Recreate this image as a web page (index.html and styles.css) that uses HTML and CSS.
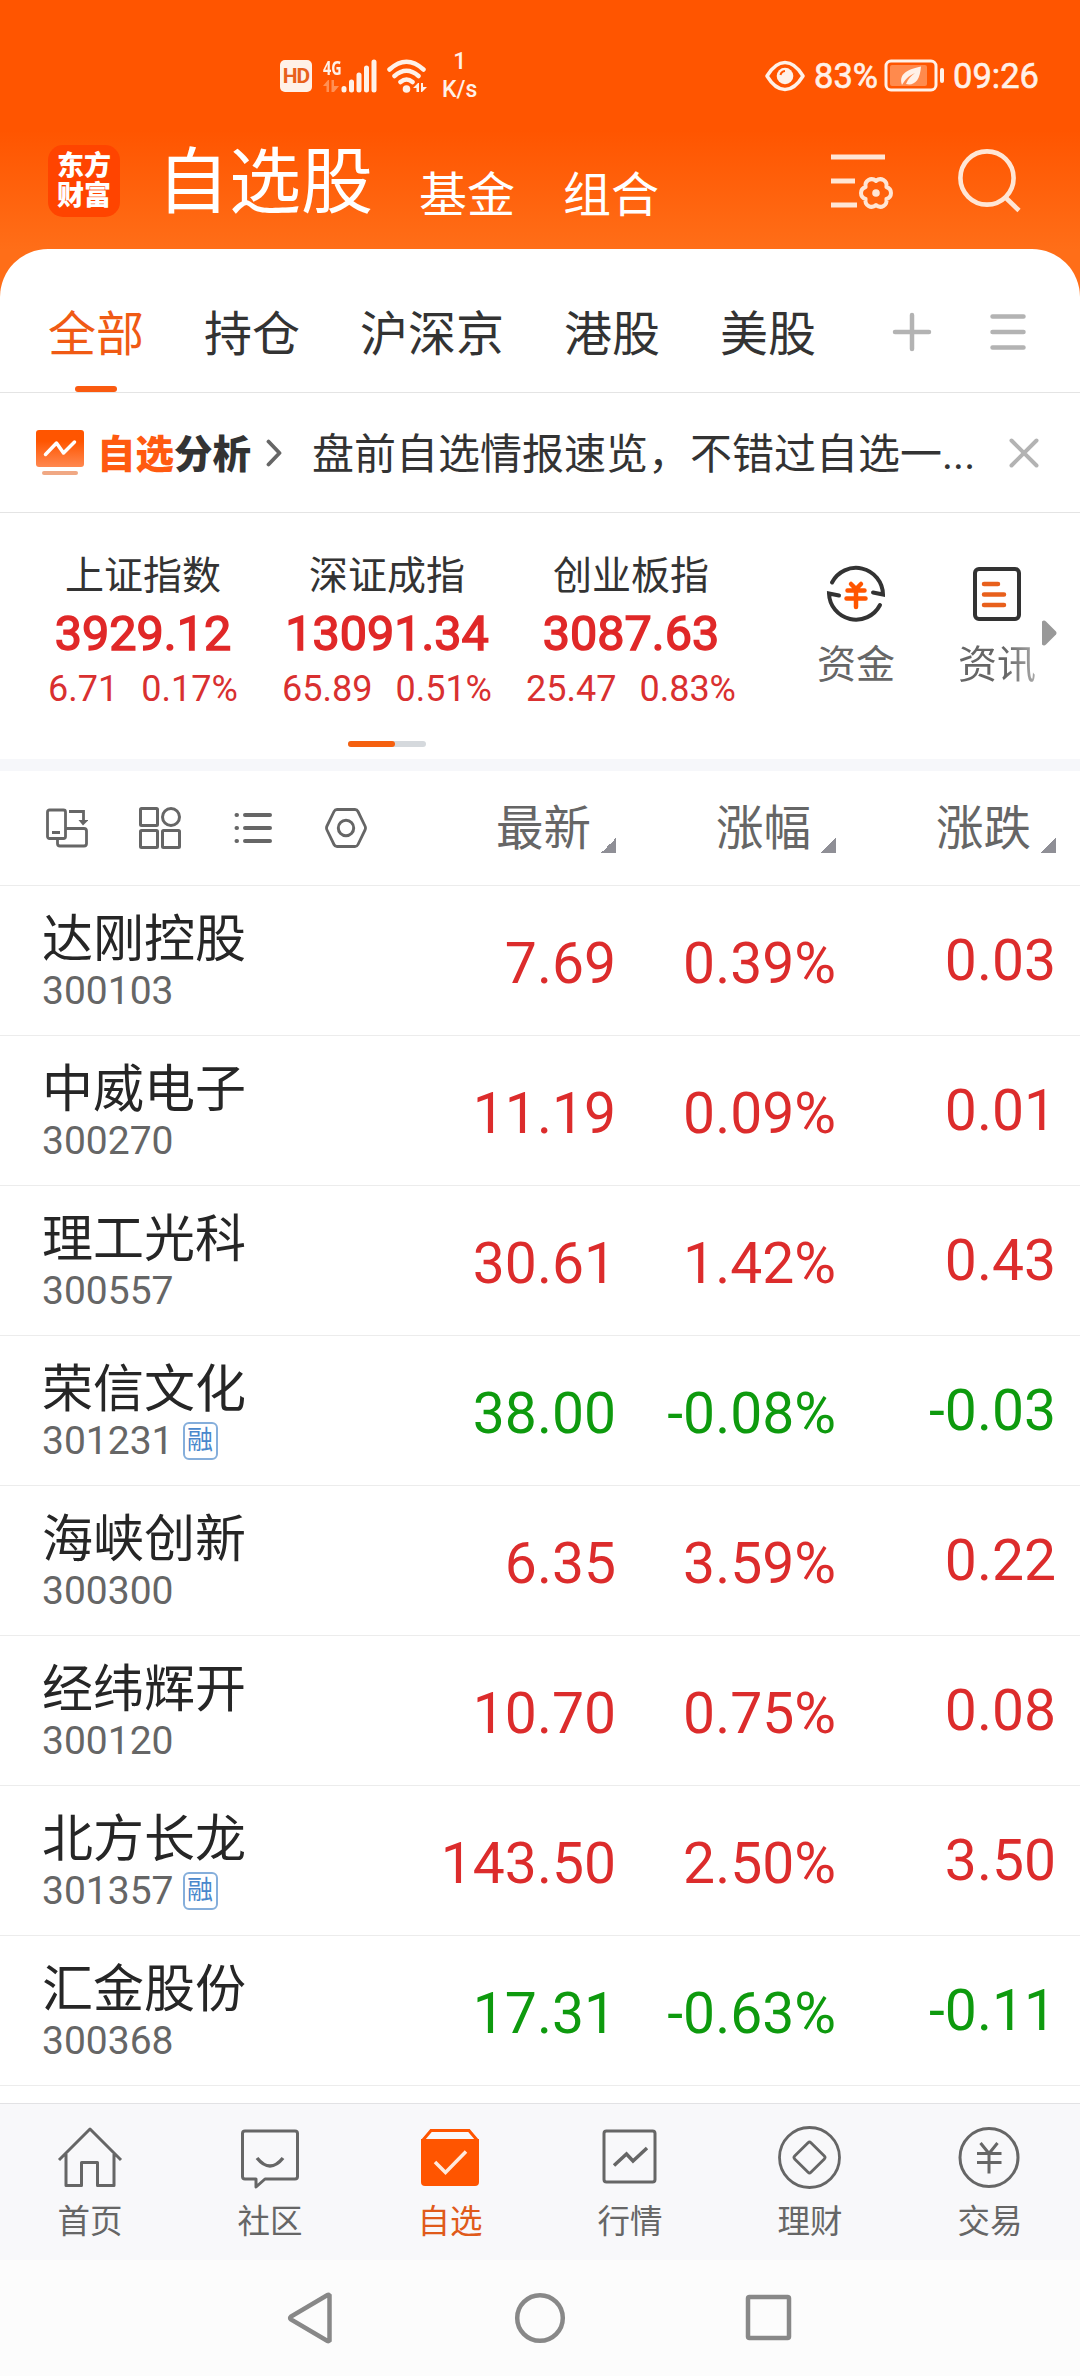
FILE: index.html
```html
<!DOCTYPE html>
<html lang="zh-CN">
  <head>
    <meta charset="utf-8">
    <title>自选股</title>
    <link rel="stylesheet" href="styles.css">
  </head>
  <body>
    <header class="header">
      <div class="status-bar">
        <div class="status-left">
          <span class="hd">HD</span>
          <div class="mobile">
            <span class="mobile-type">4G</span>
            <svg width="16" height="12" viewBox="0 0 16 12" fill="#ff9055"><path d="M0 6 5 0h1v12H3.500V6zM8.500 0H11v6h5l-5 6H8.500z"/></svg>
          </div>
          <svg class="signal" width="36" height="34" viewBox="0 0 36 34" stroke="#fff1e8" stroke-width="5" stroke-linecap="round"><path d="M3 29.500v1.500M10.500 23v8M18 16v15M25.500 9v22M33 3v28"/></svg>
          <svg class="wifi" width="42" height="34" viewBox="0 0 42 34" fill="none" stroke="#fff1e8" stroke-width="4.500" stroke-linecap="round">
            <path d="M2.500 10.500Q19.500-5 36.500 10.500M7.500 17Q19.500 6.500 31.500 17M13.500 23Q19.500 18 25.500 23"/>
            <circle cx="19.500" cy="30" r="3.800" fill="#fff1e8" stroke="none"/>
            <path d="M26 29l5-5h1v9h-2.500v-4zM34 24h2v4h4l-5 5h-1z" fill="#fff1e8" stroke="none"/>
          </svg>
          <div class="speed"><span>1</span><span>K/s</span></div>
        </div>
        <div class="status-right">
          <svg width="40" height="32" viewBox="0 0 40 32" fill="none" stroke="#fff1e8" stroke-width="3.500">
            <path d="M2 16C8 6 14 2.500 20 2.500S32 6 38 16C32 26 26 29.500 20 29.500S8 26 2 16z" stroke-linejoin="round"/>
            <circle cx="20" cy="16" r="8.300" fill="#fff1e8" stroke="none"/>
            <path d="M15.500 15a5 5 0 0 1 4.500-4" stroke="#ff5500" stroke-width="2"/>
          </svg>
          <span class="percent">83%</span>
          <svg class="battery" width="61" height="34" viewBox="0 0 61 34" fill="none">
            <rect x="2" y="2" width="50" height="29" rx="5" stroke="#fff1e8" stroke-width="3"/>
            <rect x="6" y="6" width="37" height="21" rx="2" fill="#ff8a4d"/>
            <path d="M18 26c-3-9 2-15 19-18.500C36 22 30 27 22 25c2-5 5-8 9-11-7 3-10 7-13 12z" fill="#fff1e8"/>
            <path d="M58 11v11" stroke="#fff1e8" stroke-width="4" stroke-linecap="round"/>
          </svg>
          <span>09:26</span>
        </div>
      </div>

      <div class="title-bar">
        <div class="logo"><span>东方</span><span>财富</span></div>
        <h1>自选股</h1>
        <a class="sub-title">基金</a>
        <a class="sub-title">组合</a>
        <svg class="filter" width="64" height="60" viewBox="0 0 64 60" fill="none" stroke="#ffe6d5" stroke-width="5">
          <path d="M0 6h54M0 30h24M0 54h26"/>
          <path transform="translate(45 42)" d="M10.400-6C16.500-4 16.500 4 10.400 6C11.700 12.300 4.800 16.300 0 12C-4.800 16.300-11.700 12.300-10.400 6C-16.500 4-16.500-4-10.400-6C-11.700-12.300-4.800-16.300 0-12C4.800-16.300 11.700-12.300 10.400-6z" stroke-width="4" stroke-linejoin="round"/>
          <circle cx="45" cy="42" r="3.800" fill="#ffe6d5" stroke="none"/>
        </svg>
        <svg class="search" width="64" height="64" viewBox="0 0 64 64" fill="none" stroke="#ffe6d5" stroke-width="4.600">
          <circle cx="29" cy="29" r="26.600"/>
          <path d="M47 48l14 13.500"/>
        </svg>
      </div>
    </header>

    <main class="sheet">
      <nav class="groups">
        <a class="active">全部</a>
        <a>持仓</a>
        <a>沪深京</a>
        <a>港股</a>
        <a>美股</a>
        <svg class="add" width="40" height="40" viewBox="0 0 40 40" stroke="#b3b3b3" stroke-width="4.500" stroke-linecap="round"><path d="M3 20h34M20 3v34"/></svg>
        <svg class="menu" width="36" height="36" viewBox="0 0 36 36" stroke="#b3b3b3" stroke-width="4.500" stroke-linecap="round"><path d="M2.500 2.500h31M2.500 18h31M2.500 33.500h31"/></svg>
      </nav>

      <section class="notice">
        <svg width="48" height="46" viewBox="0 0 48 46" fill="none">
          <defs>
            <linearGradient id="notice-bg" x1="0" y1="0" x2="0" y2="1">
              <stop offset=".3" stop-color="#ff5500"/>
              <stop offset="1" stop-color="#ff8850"/>
            </linearGradient>
          </defs>
          <rect width="48" height="37" rx="3" fill="url(#notice-bg)"/>
          <path d="M9.500 24.500 20.500 13l7 10L38.500 12" stroke="#fff" stroke-width="3.500" stroke-linecap="round" stroke-linejoin="round"/>
          <rect x="6" y="41" width="36" height="4" rx="2" fill="#f0a884"/>
        </svg>
        <strong><em>自选</em>分析</strong>
        <svg class="chevron" width="16" height="28" viewBox="0 0 16 28" fill="none" stroke="#666" stroke-width="3.800" stroke-linecap="round" stroke-linejoin="round"><path d="M2.500 2.500 13.500 14l-11 11.500"/></svg>
        <p>盘前自选情报速览，不错过自选一...</p>
        <svg class="close" width="30" height="30" viewBox="0 0 30 30" stroke="#b3b3b3" stroke-width="4" stroke-linecap="round"><path d="M2.500 2.500l25 25M27.500 2.500l-25 25"/></svg>
      </section>

      <section class="market">
        <div class="indices">
          <div class="index">
            <h2>上证指数</h2>
            <b>3929.12</b>
            <p><span>6.71</span><span>0.17%</span></p>
          </div>
          <div class="index">
            <h2>深证成指</h2>
            <b>13091.34</b>
            <p><span>65.89</span><span>0.51%</span></p>
          </div>
          <div class="index">
            <h2>创业板指</h2>
            <b>3087.63</b>
            <p><span>25.47</span><span>0.83%</span></p>
          </div>
          <div class="pager"><i></i></div>
        </div>
        <a class="shortcut">
          <svg width="60" height="60" viewBox="0 0 60 60" fill="none" stroke="#333" stroke-width="4" stroke-linecap="round">
            <path d="M6 18.500A27 27 0 0 1 57 30.500L47 28.500M54 41A27 27 0 0 1 3 29.500L13 31.500"/>
            <path d="M25 20l5 5 5-5M21.500 26.500h17M20.500 34.500h19M30 26v17" stroke="#ff5500" stroke-width="4.500"/>
          </svg>
          <span>资金</span>
        </a>
        <a class="shortcut">
          <svg width="60" height="60" viewBox="0 0 60 60" fill="none" stroke="#333" stroke-width="4" stroke-linecap="round">
            <rect x="8" y="5" width="44" height="50" rx="4"/>
            <path d="M17 20h14M17 30.500h20M17 41h20" stroke="#e8601c" stroke-width="4.500"/>
          </svg>
          <span class="fade">资讯</span>
        </a>
        <svg class="more" width="16" height="26" viewBox="0 0 16 26" fill="#999"><path d="M1 1.500q2-2 4 0l10 10q1 1.500 0 3l-10 10q-2 2-4 0z"/></svg>
      </section>

      <div class="columns">
        <div class="tools">
          <svg width="42" height="42" viewBox="0 0 42 42" fill="none" stroke="#666" stroke-width="2.800">
            <rect x="1.500" y="3" width="18" height="28.500" rx="2"/>
            <path d="M6 25.500h8M23 4.500h14.500v11M20 21.500h18q2.500 0 2.500 2.500v12.500q0 2.500-2.500 2.500H14q-2.500 0-2.500-2.500V32"/>
            <path d="M32.500 13h10L37 18.500z" fill="#666" stroke="none"/>
          </svg>
          <svg width="42" height="42" viewBox="0 0 42 42" fill="none" stroke="#666" stroke-width="3">
            <rect x="1.500" y="1.500" width="17" height="17" rx="1"/>
            <circle cx="32" cy="10" r="8.500"/>
            <rect x="1.500" y="23.500" width="17" height="17" rx="1"/>
            <rect x="23.500" y="23.500" width="17" height="17" rx="1"/>
          </svg>
          <svg width="42" height="42" viewBox="0 0 42 42" fill="none" stroke="#666" stroke-width="4" stroke-linecap="round"><path d="M4.500 8h.5M4.500 21h.5M4.500 34h.5M13 8h25M13 21h25M13 34h25"/></svg>
          <svg width="42" height="42" viewBox="0 0 42 42" fill="none" stroke="#666" stroke-width="2.800">
            <path d="M12 2.500h18q2 0 3 2l7 14.500q1 2 0 4l-7 14.500q-1 2-3 2H12q-2 0-3-2L2 23q-1-2 0-4L9 4.500q1-2 3-2z"/>
            <circle cx="21" cy="21" r="7.700" stroke-width="3"/>
          </svg>
        </div>
        <div class="column">最新<i></i></div>
        <div class="column">涨幅<i></i></div>
        <div class="column">涨跌<i></i></div>
      </div>

      <div class="stock up">
        <div class="name"><h3>达刚控股</h3><p>300103</p></div>
        <span>7.69</span><span>0.39%</span><span>0.03</span>
      </div>
      <div class="stock up">
        <div class="name"><h3>中威电子</h3><p>300270</p></div>
        <span>11.19</span><span>0.09%</span><span>0.01</span>
      </div>
      <div class="stock up">
        <div class="name"><h3>理工光科</h3><p>300557</p></div>
        <span>30.61</span><span>1.42%</span><span>0.43</span>
      </div>
      <div class="stock down">
        <div class="name"><h3>荣信文化</h3><p>301231<small>融</small></p></div>
        <span>38.00</span><span>-0.08%</span><span>-0.03</span>
      </div>
      <div class="stock up">
        <div class="name"><h3>海峡创新</h3><p>300300</p></div>
        <span>6.35</span><span>3.59%</span><span>0.22</span>
      </div>
      <div class="stock up">
        <div class="name"><h3>经纬辉开</h3><p>300120</p></div>
        <span>10.70</span><span>0.75%</span><span>0.08</span>
      </div>
      <div class="stock up">
        <div class="name"><h3>北方长龙</h3><p>301357<small>融</small></p></div>
        <span>143.50</span><span>2.50%</span><span>3.50</span>
      </div>
      <div class="stock down">
        <div class="name"><h3>汇金股份</h3><p>300368</p></div>
        <span>17.31</span><span>-0.63%</span><span>-0.11</span>
      </div>
    </main>

    <nav class="tab-bar">
      <a>
        <svg width="66" height="66" viewBox="0 0 66 66" fill="none" stroke="#666" stroke-width="3" stroke-linejoin="round"><path d="M2 35 33 4l31 31M9 29v31.500h15.500v-23h16v23H57V29"/></svg>
        首页
      </a>
      <a>
        <svg width="66" height="66" viewBox="0 0 66 66" fill="none" stroke="#666" stroke-width="3" stroke-linejoin="round"><path d="M8 6h50q2.500 0 2.500 2.500v43q0 2.500-2.500 2.500H28l-9 8v-8H8q-2.500 0-2.500-2.500v-43Q5.500 6 8 6z"/><path d="M20 33q13 16 26 0" stroke-width="3.500"/></svg>
        社区
      </a>
      <a class="active">
        <svg width="66" height="66" viewBox="0 0 66 66" fill="none" stroke="#ff5500"><path d="M6 15 14 5.500h38L60 15" stroke-width="3"/><path d="M4 14h58v43q0 4-4 4H8q-4 0-4-4z" fill="#ff5500" stroke="none"/><path d="M18 37l10.500 10.500L49 26.500" stroke="#ffe9dc" stroke-width="3.500"/></svg>
        自选
      </a>
      <a>
        <svg width="66" height="66" viewBox="0 0 66 66" fill="none" stroke="#666" stroke-width="3"><rect x="7" y="6" width="51" height="51" rx="2.500"/><path d="M17 40.500 29.500 29l6.500 7 14-13" stroke-width="3.500"/></svg>
        行情
      </a>
      <a>
        <svg width="66" height="66" viewBox="0 0 66 66" fill="none" stroke="#666" stroke-width="2.800"><circle cx="32.500" cy="32.500" r="30"/><rect x="21" y="21" width="23" height="23" rx="2" transform="rotate(45 32.500 32.500)"/></svg>
        理财
      </a>
      <a>
        <svg width="66" height="66" viewBox="0 0 66 66" fill="none" stroke="#666" stroke-width="3"><circle cx="32" cy="32.500" r="29"/><path d="M23.500 18 32 28.500 40.500 18M20 28.500h24.500M20 37.500h24.500M32 28v20.500"/></svg>
        交易
      </a>
    </nav>

    <footer class="system-nav">
      <svg width="54" height="54" viewBox="0 0 54 54"><path d="M45.500 4.500v45q-1 1-2 .500L7 28.500q-1.500-1.500 0-3l36.500-21.500q1-.500 2 .500z"/></svg>
      <svg width="54" height="54" viewBox="0 0 54 54"><circle cx="27" cy="27" r="22.800"/></svg>
      <svg width="54" height="54" viewBox="0 0 54 54"><rect x="6" y="6" width="41" height="41" rx="1.500"/></svg>
    </footer>
  </body>
</html>
```

FILE: styles.css
```css
* {
  box-sizing: border-box;
}
body {
  margin: 0;
  width: 1080px;
  height: 2376px;
  display: flex;
  flex-direction: column;
  overflow: hidden;
  background: #fcfcfc;
  color: #333;
  font-family: Roboto, "Noto Sans CJK SC", sans-serif;
}
h1,
h2,
h3,
p {
  margin: 0;
  font-weight: 400;
}
svg {
  display: block;
  flex: none;
}

/* header */
.header {
  height: 297px;
  flex: none;
  background: linear-gradient(#ff5500 130px, #ff6e18 250px);
  color: #fff;
}
.status-bar {
  height: 129px;
  padding: 22px 41px 0 280px;
  display: flex;
  justify-content: space-between;
  align-items: center;
  color: #fff1e8;
}
.status-left,
.status-right {
  display: flex;
  align-items: center;
}
.hd {
  width: 32px;
  height: 32px;
  border-radius: 5px;
  background: #fff1e8;
  color: #e8601c;
  font-size: 21px;
  font-weight: 700;
  line-height: 33px;
  text-align: center;
  letter-spacing: -1px;
}
.mobile {
  width: 18px;
  height: 34px;
  margin-left: 11px;
}
.mobile-type {
  display: block;
  height: 21px;
  font-family: "Open Sans", sans-serif;
  font-size: 20px;
  font-weight: 700;
  line-height: 17px;
  transform: scaleX(0.72);
  transform-origin: left;
}
.wifi {
  margin-left: 10px;
}
.speed {
  display: flex;
  flex-direction: column;
  align-items: center;
  margin-left: 13px;
  font-size: 23px;
  font-weight: 500;
  line-height: 28px;
}
.status-right {
  font-size: 34.500px;
  -webkit-text-stroke: 0.600px;
}
.percent {
  margin: 0 6px 0 9px;
}
.battery {
  margin-right: 8px;
}
.title-bar {
  height: 110px;
  padding: 0 58px 0 48px;
  display: flex;
  align-items: flex-start;
}
.logo {
  width: 72px;
  height: 72px;
  margin-top: 16px;
  padding-top: 6px;
  border-radius: 15px;
  background: #ff4400;
  font-size: 27px;
  font-weight: 900;
  line-height: 30px;
  text-align: center;
}
.logo span {
  display: block;
}
h1 {
  margin: 4px 0 0 37px;
  font-size: 72px;
  line-height: 100px;
}
.sub-title {
  margin: 42px 0 0 48px;
  font-size: 48px;
  line-height: 50px;
}
h1 + .sub-title {
  margin-left: 46px;
}
.filter {
  margin: 22px 0 0 auto;
}
.search {
  margin: 20px 0 0 63px;
}

/* white sheet */
.sheet {
  height: 1854px;
  margin-top: -48px;
  flex: none;
  border-radius: 48px 48px 0 0;
  background: #fff;
}
.groups {
  height: 144px;
  padding: 23px 54px 0 48px;
  display: flex;
  align-items: center;
  gap: 60px;
  border-bottom: 1px solid #e4e4e4;
  font-size: 48px;
}
.groups a {
  position: relative;
  padding-top: 6px;
  line-height: 72px;
}
.groups .active {
  color: #f05a14;
}
.groups .active::after {
  content: "";
  position: absolute;
  left: 27px;
  bottom: -21px;
  width: 42px;
  height: 6px;
  border-radius: 3px;
  background: #fa5a10;
}
.add {
  margin-left: 16px;
}
.menu {
  margin-left: -2px;
}
.notice {
  height: 120px;
  padding: 0 41px 0 36px;
  display: flex;
  align-items: center;
  border-bottom: 1px solid #e4e4e4;
}
.notice strong {
  margin-left: 13px;
  padding-bottom: 4px;
  font-size: 38.500px;
  font-weight: 900;
}
.notice em {
  color: #ff5a10;
  font-style: normal;
}
.chevron {
  margin-left: 15px;
}
.notice p {
  margin-left: 30px;
  padding-bottom: 5px;
  font-size: 42px;
  white-space: nowrap;
}
.close {
  margin-left: auto;
}

/* indices */
.market {
  height: 258px;
  padding-left: 21px;
  display: flex;
  align-items: flex-start;
  border-bottom: 12px solid #f6f7fa;
}
.indices {
  display: grid;
  grid-template-columns: repeat(3, 244px);
  width: 748px;
}
.index {
  padding-top: 38px;
  text-align: center;
  color: #d93030;
}
.index h2 {
  color: #333;
  font-size: 39px;
  line-height: 50px;
}
.index b {
  display: block;
  color: #e02828;
  font-size: 48.500px;
  font-weight: 400;
  line-height: 65px;
  -webkit-text-stroke: 1.500px;
}
.index p {
  display: flex;
  justify-content: center;
  gap: 23px;
  font-size: 36px;
  line-height: 46px;
}
.pager {
  grid-column: 1 / -1;
  width: 78px;
  height: 6px;
  margin: 29px 0 0 327px;
  border-radius: 3px;
  background: #d5d9dd;
}
.pager i {
  display: block;
  width: 47px;
  height: 6px;
  border-radius: 3px;
  background: #f5600f;
}
.shortcut {
  width: 78px;
  margin: 51px 0 0 48px;
  display: flex;
  flex-direction: column;
  align-items: center;
  color: #666;
  font-size: 39px;
  line-height: 50px;
}
.shortcut span {
  margin-top: 16px;
}
.shortcut + .shortcut {
  margin-left: 63px;
}
.shortcut .fade {
  color: transparent;
  background: linear-gradient(90deg, #666 60%, #aaa);
  background-clip: text;
}
.more {
  margin: 107px 0 0 5px;
}

/* list */
.columns,
.stock {
  display: grid;
  grid-template-columns: 396px 220px 220px 220px;
  border-bottom: 1px solid #ececec;
}
.columns {
  height: 115px;
  align-items: center;
  color: #666;
  font-size: 47.500px;
}
.tools {
  display: flex;
  gap: 51px;
  padding-left: 46px;
}
.column {
  display: flex;
  justify-content: flex-end;
  align-items: center;
  padding-bottom: 7px;
}
.column i {
  width: 15px;
  height: 15px;
  margin: 42px 0 0 10px;
  background: linear-gradient(135deg, transparent 50%, #8f8f96 50%);
}
.stock {
  height: 150px;
  font-size: 57px;
  line-height: 155px;
}
.stock > span {
  text-align: right;
}
.stock > span:last-child {
  line-height: 149px;
}
.name {
  padding: 22px 0 0 42px;
}
.name h3 {
  color: #262626;
  font-size: 51px;
  line-height: 64px;
}
.name p {
  display: flex;
  align-items: center;
  color: #666;
  font-size: 39px;
  line-height: 38px;
}
.name small {
  width: 35px;
  height: 38px;
  margin-left: 9px;
  border: 2px solid #85aedb;
  border-radius: 6px;
  color: #4a88cc;
  font-size: 26px;
  line-height: 33px;
  text-align: center;
}
.up {
  color: #dc2c2c;
}
.down {
  color: #0e9a0e;
}

/* bottom bars */
.tab-bar {
  height: 157px;
  flex: none;
  display: flex;
  border-top: 1px solid #e2e2e4;
  background: #f8f8fa;
}
.tab-bar a {
  width: 180px;
  padding-top: 21px;
  display: flex;
  flex-direction: column;
  align-items: center;
  gap: 8px;
  color: #666;
  font-size: 32.500px;
  line-height: 46px;
}
.tab-bar .active {
  color: #e05a1a;
}
.system-nav {
  height: 116px;
  display: flex;
  justify-content: center;
  align-items: center;
  gap: 175px;
}
.system-nav svg {
  fill: none;
  stroke: #888;
  stroke-width: 4.500px;
}
```
